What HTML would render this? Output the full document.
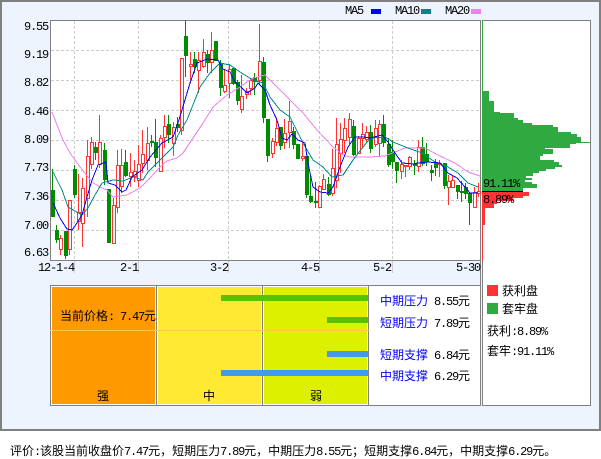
<!DOCTYPE html>
<html><head><meta charset="utf-8"><style>
html,body{margin:0;padding:0;background:#fff;width:601px;height:456px;overflow:hidden}
#o{position:absolute;left:0;top:0;width:597px;height:427px;border:2px solid #808080;background:#EDF4FD}
svg{position:absolute;left:0;top:0}
.t{position:absolute;white-space:nowrap;font:12px/14px "WenQuanYi Zen Hei","Noto Sans CJK SC",sans-serif;color:#000}
.m{font-family:"Liberation Mono",monospace;font-style:normal;letter-spacing:-1.2px;font-size:12px}
.b{color:#00f}
</style></head><body>
<div id="o"></div>
<svg width="601" height="456" viewBox="0 0 601 456" shape-rendering="crispEdges">
<rect x="50" y="20" width="431" height="240" fill="#fff"/>
<rect x="482" y="20" width="108" height="385" fill="#fff"/>
<path d="M51 50.5H480M51 80.5H480M51 110.5H480M51 140.5H480M51 170.5H480M51 200.5H480M51 230.5H480M74.5 21V260M138.5 21V260M228.5 21V260M319.5 21V260M392.5 21V260" stroke="#ccc" fill="none" stroke-dasharray="3 2"/>
<path d="M74.5 261V273M138.5 261V273M228.5 261V273M319.5 261V273M392.5 261V273M480.5 261V273" stroke="#ccc" fill="none"/>
<path d="M50.5 260V20.5H480.5V260M50 260.5H481" stroke="#808080" fill="none"/>
<path d="M480.5 20V405M482.5 20V405M482 20.5H590M590.5 20V405.5M482 405.5H591" stroke="#808080" fill="none"/>
<!-- green wicks -->
<path stroke="#008C00" fill="none" d="M52.5 169V217M56.5 225V243M65.5 231V259M74.5 165V198M95.5 142V160M104.5 143V185M125.5 150V177M151.5 135V147M155.5 119V167M168.5 115V143M177.5 117V132M185.5 20V77M194.5 52V73M207.5 50V73M220.5 60V96M233.5 67V85M237.5 80V105M254.5 73V95M263.5 57V123M267.5 119V162M280.5 127V150M293.5 127V149M306.5 156V198M310.5 176V203M315.5 182V208M328.5 177V196M353.5 120V156M370.5 125V153M383.5 115V147M388.5 138V167M392.5 140V169M396.5 162V183M414.5 160V175M422.5 137V166M426.5 143V166M431.5 165V181M435.5 159V176M444.5 163V189M457.5 185V199M461.5 181V202M465.5 183V199M469.5 193V225"/>
<!-- green bodies -->
<path fill="#008C00" d="M51 190h4v27h-4zM55 230h4v10h-4zM64 231h4v25h-4zM73 169h4v26h-4zM94 147h4v6h-4zM103 150h4v30h-4zM107 189h4v54h-4zM124 162h4v14h-4zM150 141h4v2h-4zM154 142h4v16h-4zM167 124h4v11h-4zM176 124h4v4h-4zM184 36h4v20h-4zM193 59h4v8h-4zM206 54h4v9h-4zM214 41h4v20h-4zM219 64h4v24h-4zM232 68h4v16h-4zM236 82h4v19h-4zM253 77h4v5h-4zM262 62h4v56h-4zM266 119h4v37h-4zM279 127h4v19h-4zM292 131h4v14h-4zM296 144h4v15h-4zM305 156h4v39h-4zM309 196h4v6h-4zM314 201h4v2h-4zM327 184h4v11h-4zM352 126h4v29h-4zM369 132h4v17h-4zM382 124h4v19h-4zM387 144h4v21h-4zM391 152h4v10h-4zM395 162h4v9h-4zM413 164h4v2h-4zM421 147h4v17h-4zM425 154h4v8h-4zM430 170h4v3h-4zM434 162h4v6h-4zM443 163h4v23h-4zM456 185h4v7h-4zM460 191h4v2h-4zM464 187h4v7h-4zM468 193h4v10h-4z"/>
<!-- red wicks -->
<path stroke="#FF3333" fill="none" d="M60.5 235V255M69.5 200V255M78.5 174V230M82.5 178V247M87.5 140V217M91.5 137V169M99.5 115V168M113.5 198V243M117.5 150V213M121.5 149V193M130.5 153V187M134.5 160V182M138.5 145V187M142.5 130V173M147.5 127V170M160.5 135V172M164.5 115V148M173.5 122V156M181.5 58V135M190.5 52V83M198.5 52V93M203.5 39V68M211.5 32V73M224.5 70V93M229.5 64V98M241.5 75V113M246.5 88V99M250.5 79V95M259.5 24V85M272.5 138V158M276.5 118V146M284.5 119V149M289.5 101V148M302.5 142V161M319.5 185V207M323.5 174V190M332.5 149V196M336.5 118V188M340.5 123V173M344.5 118V153M349.5 113V144M358.5 136V154M362.5 123V148M366.5 126V143M375.5 120V147M379.5 120V157M401.5 160V179M405.5 165V177M409.5 156V170M418.5 140V172M439.5 160V177M448.5 175V205M452.5 175V187M474.5 187V208M478.5 183V197"/>
<!-- red bodies -->
<path stroke="#FF3333" fill="#fff" d="M59.5 238.5h3v11h-3zM68.5 200.5h3v49h-3zM77.5 212.5h3v9h-3zM81.5 188.5h3v35h-3zM86.5 156.5h3v42h-3zM90.5 142.5h3v22h-3zM98.5 142.5h3v22h-3zM112.5 205.5h3v38h-3zM116.5 165.5h3v42h-3zM120.5 165.5h3v21h-3zM129.5 172.5h3v4h-3zM133.5 171.5h3v5h-3zM137.5 164.5h3v16h-3zM141.5 154.5h3v9h-3zM146.5 143.5h3v17h-3zM159.5 138.5h3v33h-3zM163.5 126.5h3v11h-3zM172.5 127.5h3v16h-3zM180.5 58.5h3v72h-3zM189.5 64.5h3v2h-3zM197.5 60.5h3v10h-3zM202.5 52.5h3v14h-3zM210.5 50.5h3v12h-3zM223.5 85.5h3v6h-3zM228.5 69.5h3v14h-3zM240.5 96.5h3v13h-3zM245.5 91.5h3v3h-3zM249.5 80.5h3v8h-3zM258.5 61.5h3v19h-3zM271.5 141.5h3v12h-3zM275.5 128.5h3v14h-3zM283.5 133.5h3v9h-3zM288.5 121.5h3v11h-3zM301.5 156.5h3v2h-3zM318.5 186.5h3v21h-3zM322.5 179.5h3v10h-3zM331.5 168.5h3v25h-3zM335.5 144.5h3v36h-3zM339.5 139.5h3v14h-3zM343.5 128.5h3v12h-3zM348.5 119.5h3v18h-3zM357.5 138.5h3v15h-3zM361.5 134.5h3v4h-3zM365.5 132.5h3v7h-3zM374.5 128.5h3v16h-3zM378.5 124.5h3v19h-3zM400.5 164.5h3v7h-3zM404.5 165.5h3v1h-3zM408.5 157.5h3v9h-3zM417.5 147.5h3v19h-3zM438.5 163.5h3v1h-3zM447.5 181.5h3v6h-3zM451.5 180.5h3v7h-3zM473.5 192.5h3v15h-3zM477.5 191.5h3v2h-3z"/>
<!-- MA lines -->
<polyline fill="none" stroke="#EE82EE" points="52,112 57,125 63,140 70,153 80,167 92,182 100,187 107,190 113,197 127,195 140,188 150,178 160,167 167,161 177,158 183,153 193,138 203,123 213,107 227,95 240,87 253,78 265,75 277,87 293,103 303,113 317,130 333,147 343,155 350,157 370,157 385,156 405,148 425,148 438,155 455,163 468,172 480,176"/>
<polyline fill="none" stroke="#008888" points="53,172 62,190 68,207 82,215 88,208 95,195 102,183 113,180 123,181 133,177 143,180 148,172 155,165 163,157 173,147 178,135 187,120 200,87 210,73 220,63 230,65 240,72 253,80 263,83 270,97 280,110 290,117 303,143 313,160 323,167 332,177 343,175 353,160 367,142 372,138 385,137 393,142 408,148 422,153 435,162 448,167 458,173 468,183 478,187"/>
<polyline fill="none" stroke="#0000FF" points="53,203 60,218 67,229 72,230 77,223 82,215 87,197 92,180 98,165 106,162 108,183 115,185 122,192 126,190 132,177 142,170 150,157 162,143 173,137 178,123 182,110 190,83 197,63 207,59 218,60 223,69 230,72 235,82 242,88 247,93 255,88 258,83 265,90 270,105 277,120 282,138 287,140 292,134 298,140 305,143 308,163 313,187 320,192 328,193 333,187 340,167 348,147 355,137 363,137 370,138 382,135 388,142 395,153 402,163 413,164 418,163 428,162 440,163 448,173 457,178 465,187 470,193 478,193"/>
<!-- histogram -->
<path fill="#2EAA40" d="M482 20h1v71h-1zM482 91h7v10h-7zM482 101h12v11h-12zM482 112h18v1h-18zM482 113h32v5h-32zM482 118h36v2h-36zM482 120h41v3h-41zM482 123h50v2h-50zM482 125h71v2h-71zM482 127h76v5h-76zM482 132h89v2h-89zM482 134h95v3h-95zM482 137h99v5h-99zM482 142h108v1h-108zM482 143h94v1h-94zM482 144h88v4h-88zM482 148h63v1h-63zM482 149h71v5h-71zM482 154h61v2h-61zM482 156h58v4h-58zM482 160h72v2h-72zM482 162h77v3h-77zM482 165h80v2h-80zM482 167h73v2h-73zM482 169h64v2h-64zM482 171h57v2h-57zM482 173h51v3h-51zM482 176h44v2h-44zM482 178h50v2h-50zM482 180h43v2h-43zM482 182h50v2h-50zM482 184h55v4h-55zM482 188h41v3h-41z"/>
<rect x="482" y="191" width="41" height="1" fill="#000"/>
<path fill="#FF3333" d="M482 192h47v4h-47zM482 196h41v2h-41zM482 198h31v3h-31zM482 201h15v3h-15zM482 204h12v4h-12zM482 208h3v17h-3zM482 225h1v36h-1z"/>
<!-- bottom box -->
<rect x="50.5" y="285.5" width="430" height="120" fill="#fff" stroke="#808080"/>
<rect x="52" y="287" width="103" height="117" fill="#FF9900"/>
<rect x="158" y="287" width="103" height="117" fill="#FFE933"/>
<rect x="264" y="287" width="103" height="117" fill="#DCF000"/>
<path d="M156.5 286V405M262.5 286V405M368.5 286V405" stroke="#808080" fill="none"/>
<rect x="221" y="295" width="147" height="6" fill="#5CC000"/>
<rect x="327" y="317" width="41" height="6" fill="#5CC000"/>
<rect x="327" y="351" width="41" height="6" fill="#4499EE"/>
<rect x="221" y="370" width="147" height="6" fill="#4499EE"/>
<rect x="50" y="330" width="320" height="1" fill="#FFC84D"/>
<rect x="487" y="285" width="11" height="11" fill="#FF3333"/>
<rect x="487" y="303" width="11" height="11" fill="#2EAA40"/>
<rect x="371" y="9" width="10" height="5" fill="#0000FF"/>
<rect x="421" y="9" width="10" height="5" fill="#008888"/>
<rect x="471" y="9" width="10" height="5" fill="#EE82EE"/>
</svg>
<div class="t m" style="left:345px;top:4px">MA5</div>
<div class="t m" style="left:395px;top:4px">MA10</div>
<div class="t m" style="left:445px;top:4px">MA20</div>
<div class="t m" style="left:24px;top:20px">9.55</div>
<div class="t m" style="left:24px;top:48px">9.19</div>
<div class="t m" style="left:24px;top:76px">8.82</div>
<div class="t m" style="left:24px;top:105px">8.46</div>
<div class="t m" style="left:24px;top:133px">8.09</div>
<div class="t m" style="left:24px;top:161px">7.73</div>
<div class="t m" style="left:24px;top:190px">7.36</div>
<div class="t m" style="left:24px;top:219px">7.00</div>
<div class="t m" style="left:24px;top:246px">6.63</div>
<div class="t m" style="left:38px;top:261px">12-1-4</div>
<div class="t m" style="left:120px;top:261px">2-1</div>
<div class="t m" style="left:210px;top:261px">3-2</div>
<div class="t m" style="left:301px;top:261px">4-5</div>
<div class="t m" style="left:373px;top:261px">5-2</div>
<div class="t m" style="left:456px;top:261px">5-30</div>
<div class="t m" style="left:483px;top:177px">91.11%</div>
<div class="t m" style="left:483px;top:193px">8.89%</div>
<div class="t" style="left:60px;top:309px">当前价格<i class="m">: 7.47</i>元</div>
<div class="t" style="left:97px;top:389px">强</div>
<div class="t" style="left:203px;top:389px">中</div>
<div class="t" style="left:310px;top:389px">弱</div>
<div class="t b" style="left:380px;top:294px">中期压力</div>
<div class="t b" style="left:380px;top:316px">短期压力</div>
<div class="t b" style="left:380px;top:348px">短期支撑</div>
<div class="t b" style="left:380px;top:369px">中期支撑</div>
<div class="t" style="left:434px;top:294px"><i class="m">8.55</i>元</div>
<div class="t" style="left:434px;top:316px"><i class="m">7.89</i>元</div>
<div class="t" style="left:434px;top:348px"><i class="m">6.84</i>元</div>
<div class="t" style="left:434px;top:369px"><i class="m">6.29</i>元</div>
<div class="t" style="left:502px;top:284px">获利盘</div>
<div class="t" style="left:502px;top:302px">套牢盘</div>
<div class="t" style="left:487px;top:324px">获利<i class="m">:8.89%</i></div>
<div class="t" style="left:487px;top:344px">套牢<i class="m">:91.11%</i></div>
<div class="t" style="left:10px;top:444px">评价<i class="m">:</i>该股当前收盘价<i class="m">7.47</i>元，短期压力<i class="m">7.89</i>元，中期压力<i class="m">8.55</i>元；短期支撑<i class="m">6.84</i>元，中期支撑<i class="m">6.29</i>元。</div>
</body></html>
